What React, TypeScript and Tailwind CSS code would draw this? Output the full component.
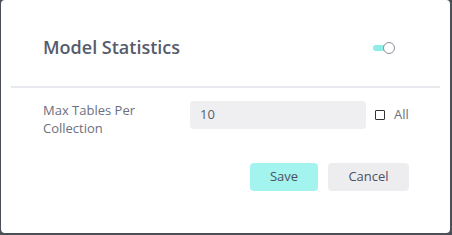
export default function App() {
  return (
    <div className="h-[235px] w-[452px] bg-[#4b5058] pl-px pr-[2px] pb-[2px]">
      <div className="flex h-full w-full flex-col rounded-[4px] bg-white font-['Open_Sans',sans-serif]">
        <div className="flex h-[86px] items-center justify-between pl-[42px] pr-[55px] pt-[9px]">
          <h2 className="text-[18px] font-semibold text-[#565c6b]">Model Statistics</h2>
          <div className="relative h-[12px] w-[22px]">
            <div className="absolute left-0 top-[3px] h-[6px] w-[16px] rounded-full bg-[#8eede7]" />
            <div className="absolute right-0 top-0 h-[12px] w-[12px] rounded-full border border-[#8a8f99] bg-white" />
          </div>
        </div>
        <div className="mx-[10px] h-[2px] bg-[#e8e9ee]" />
        <div className="flex pl-[42px] pr-[41px] pt-[13px]">
          <div className="w-[147px] text-[13px] leading-[18px] text-[#6b7080]">
            Max Tables Per
            <br />
            Collection
          </div>
          <div className="flex h-[28px] w-[176px] items-center rounded-[4px] bg-[#efeff1] px-[10px] text-[13px] text-[#565c6b]">
            10
          </div>
          <label className="ml-[9px] flex h-[28px] items-center gap-[9px] text-[13px] text-[#6b7080]">
            <span className="block h-[10px] w-[10px] rounded-[1px] border-[1.5px] border-[#333]" />
            All
          </label>
        </div>
        <div className="flex justify-end gap-[10px] pr-[41px] pt-[26px]">
          <button className="h-[28px] w-[68px] rounded-[4px] bg-[#a3f3ee] text-[13px] text-[#4b5160]">Save</button>
          <button className="h-[28px] w-[81px] rounded-[4px] bg-[#ededf0] text-[13px] text-[#4b5160]">Cancel</button>
        </div>
      </div>
    </div>
  );
}
